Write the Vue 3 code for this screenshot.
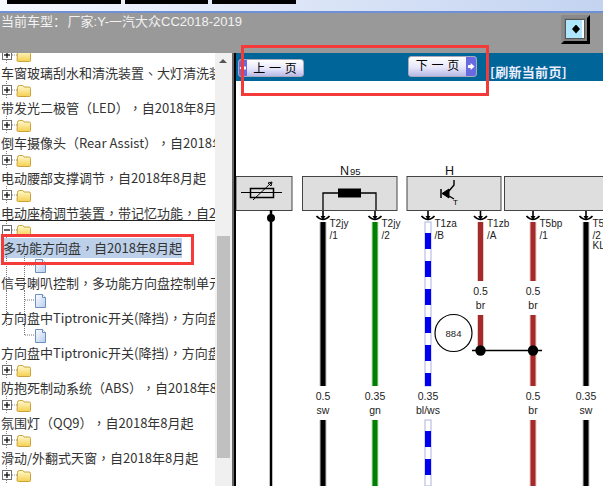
<script setup>
const items = [
  { t: '车窗玻璃刮水和清洗装置、大灯清洗装置，自2018年8月起', k: 'folder' },
  { t: '带发光二极管（LED），自2018年8月起', k: 'folder' },
  { t: '倒车摄像头（Rear Assist），自2018年8月起', k: 'folder' },
  { t: '电动腰部支撑调节，自2018年8月起', k: 'folder' },
  { t: '电动座椅调节装置，带记忆功能，自2018年8月起', k: 'folder', rule: true },
  { t: '多功能方向盘，自2018年8月起', k: 'open', sel: true },
  { t: '信号喇叭控制，多功能方向盘控制单元，自2018年8月起', k: 'doc', outer: true },
  { t: '方向盘中Tiptronic开关(降挡)，方向盘左侧，自2018年8月起', k: 'doc', outer: true, inner: true },
  { t: '方向盘中Tiptronic开关(降挡)，方向盘右侧，自2018年8月起', k: 'doc', last: true },
  { t: '防抱死制动系统（ABS），自2018年8月起', k: 'folder' },
  { t: '氛围灯（QQ9），自2018年8月起', k: 'folder' },
  { t: '滑动/外翻式天窗，自2018年8月起', k: 'folder' },
  { t: '', k: 'folder' }
]

const boxes = [
  { x: 236, w: 56 }, { x: 302.5, w: 94.5 }, { x: 407, w: 94 }, { x: 504.5, w: 104 }
]

const solids = [
  { x: 323, c: '#000', s: [[222, 386], [420, 486]] },
  { x: 375, c: '#008000', s: [[222, 386], [420, 486]] },
  { x: 480.5, c: '#a52a2a', s: [[222, 281], [315, 352]] },
  { x: 533, c: '#a52a2a', s: [[222, 281], [315, 386], [420, 486]] },
  { x: 586, c: '#000', s: [[222, 386], [420, 486]] }
]

const blueTop = [233, 261, 289, 317, 345, 373]
const blueBottom = [431, 459]

const connectors = [
  { x: 323, a: 'T2jy', b: '/1' }, { x: 375, a: 'T2jy', b: '/2' },
  { x: 428, a: 'T1za', b: '/B' }, { x: 480.5, a: 'T1zb', b: '/A' },
  { x: 533, a: 'T5bp', b: '/1' }, { x: 586, a: 'T5bp', b: '/2', c: 'KL' }
]

const sizes = [
  { x: 323, y: 396, a: '0.5', b: 'sw' }, { x: 375, y: 396, a: '0.35', b: 'gn' },
  { x: 428, y: 396, a: '0.35', b: 'bl/ws' }, { x: 533, y: 396, a: '0.5', b: 'br' },
  { x: 586, y: 396, a: '0.35', b: 'sw' }, { x: 480.5, y: 291, a: '0.5', b: 'br' },
  { x: 533, y: 291, a: '0.5', b: 'br' }
]
</script>

<template>
  <div class="page">
    <svg class="defs" width="0" height="0">
      <defs>
        <linearGradient id="fold" x1="0" y1="0" x2="0" y2="1">
          <stop offset="0" stop-color="#fffbd0" />
          <stop offset="1" stop-color="#f5cf4e" />
        </linearGradient>
        <linearGradient id="sheet" x1="0" y1="0" x2="1" y2="1">
          <stop offset="0" stop-color="#fff" />
          <stop offset="1" stop-color="#b5cdf0" />
        </linearGradient>
      </defs>
    </svg>

    <header class="top">
      <div class="tabs"><i class="tab t1"></i><i class="tab t2"></i><i class="tab t3"></i></div>
    </header>

    <div class="band">
      <span class="model">当前车型： 厂家:Y-一汽大众CC2018-2019</span>
      <button class="toggle"><span class="toggle-in"><i class="diamond"></i></span></button>
    </div>

    <div class="main">
      <aside class="tree">
        <div class="tree-in">
          <div v-for="(it, i) in items" :key="i" class="item">
            <i v-if="it.outer" class="guide outer"></i>
            <i v-if="it.inner || it.k === 'doc'" class="guide inner" :class="{ half: it.last }"></i>
            <div class="icons">
              <svg v-if="it.k !== 'doc'" width="34" height="18" viewBox="0 0 34 18">
                <path d="M6.500 0v4M6.500 14v4" stroke="#888" stroke-dasharray="1 1" />
                <rect x="2.500" y="4.500" width="9" height="9" fill="#fff" stroke="#707070" />
                <path d="M4 9h6" stroke="#000" stroke-width="1.200" />
                <path v-if="it.k === 'folder'" d="M7 6v6" stroke="#000" stroke-width="1.200" />
                <path d="M12 9h5" stroke="#888" stroke-dasharray="1 1" />
                <path d="M17.500 6.500q0-2 2-2h3q1 0 1.500 1.500h5q1.500 0 1.500 1.500v7q0 1-1 1h-11q-1.500 0-1.500-1z" fill="url(#fold)" stroke="#c9a23c" />
              </svg>
              <svg v-else width="48" height="18" viewBox="0 0 48 18">
                <path d="M25 9h10" stroke="#777" stroke-dasharray="1 1" />
                <path d="M35.500 3.500h7l3 3v10h-10z" fill="url(#sheet)" stroke="#6f8fbf" />
                <path d="M42.500 3.500v3h3" fill="#fff" stroke="#6f8fbf" />
              </svg>
            </div>
            <div class="label" :class="{ rule: it.rule }"><span :class="{ selected: it.sel }">{{ it.t }}</span></div>
          </div>
        </div>
      </aside>

      <div class="scroll">
        <i class="up"></i>
        <i class="thumb"></i>
      </div>

      <div class="split"></div>

      <section class="content">
        <div class="bar">
          <button class="pg prev"><span class="cell"><i class="arrow"></i></span><span class="txt">上 一 页</span></button>
          <button class="pg next"><span class="txt">下 一 页</span><span class="cell"><i class="arrow"></i></span></button>
          <span class="refresh">[刷新当前页]</span>
        </div>

        <svg class="diagram" width="367" height="405" viewBox="236 81 367 405">
          <g v-for="(b, i) in boxes" :key="'b' + i">
            <rect :x="b.x" y="176.500" :width="b.w" height="34" fill="#dedede" stroke="#444" />
          </g>

          <text class="name" x="340" y="175">N</text>
          <text class="sub" x="350" y="175">95</text>
          <text class="name" x="445" y="175">H</text>

          <path d="M241 192.500h41" stroke="#000" fill="none" />
          <rect x="250.500" y="188.500" width="23" height="9" fill="none" stroke="#000" stroke-width="1.500" />
          <path d="M253 200l18-17M272 182l-4 1 3 3z" stroke="#000" fill="none" />

          <path d="M323 210v-17h15M361 193h15v17" fill="none" stroke="#000" stroke-width="1.300" />
          <rect x="338" y="188.500" width="23" height="9" fill="#000" />

          <path d="M441 189v9" stroke="#000" stroke-width="1.500" />
          <path d="M442 193.500l7-4.500v9z" fill="#000" stroke="#000" />
          <path d="M449 191l5-6v-5M449 196l5 3" fill="none" stroke="#000" stroke-width="1.400" />
          <text class="tiny" x="453" y="205">T</text>

          <path d="M271 210v276" stroke="#000" stroke-width="2.500" />
          <circle cx="271" cy="218" r="4" fill="#000" />

          <g v-for="w in solids" :key="'w' + w.x">
            <g v-for="(s, j) in w.s" :key="j">
              <rect :x="w.x - 3.500" :y="s[0]" width="7" :height="s[1] - s[0]" :fill="w.c" opacity=".25" />
              <rect :x="w.x - 2.500" :y="s[0]" width="5" :height="s[1] - s[0]" :fill="w.c" />
            </g>
          </g>

          <rect x="425" y="222" width="6" height="164" fill="#fff" stroke="#aab4e0" />
          <rect x="425" y="420" width="6" height="66" fill="#fff" stroke="#aab4e0" />
          <rect v-for="y in blueTop" :key="'t' + y" x="425" :y="y" width="6" :height="y === 373 ? 13 : 16" fill="#0000ee" />
          <rect v-for="y in blueBottom" :key="'u' + y" x="425" :y="y" width="6" height="16" fill="#0000ee" />

          <g v-for="c in connectors" :key="c.x">
            <path :d="`M${c.x} 211v7`" stroke="#000" stroke-width="1.600" />
            <path :d="`M${c.x - 2.500} 216l2.500 4 2.500-4z`" fill="#000" />
            <path :d="`M${c.x - 6.500} 216q6.500 7 13 0`" fill="none" stroke="#000" stroke-width="1.700" />
            <text class="pin" :x="c.x + 6.500" y="227">{{ c.a }}</text>
            <text class="pin" :x="c.x + 6.500" y="239">{{ c.b }}</text>
            <text v-if="c.c" class="pin" :x="c.x + 6.500" y="249">{{ c.c }}</text>
          </g>

          <g v-for="(l, i) in sizes" :key="'s' + i">
            <rect :x="l.x - 18" :y="l.y - 9" width="36" height="27" fill="#fff" />
            <text class="size" :x="l.x" :y="l.y + 4" text-anchor="middle">{{ l.a }}</text>
            <text class="size" :x="l.x" :y="l.y + 18" text-anchor="middle">{{ l.b }}</text>
          </g>

          <circle cx="453.500" cy="333" r="18.500" fill="#fff" stroke="#000" stroke-width="1.200" />
          <text class="circ" x="453.500" y="336.500" text-anchor="middle">884</text>

          <path d="M472 350.500h70" stroke="#000" stroke-width="1.500" />
          <circle cx="480.500" cy="350.500" r="5.200" fill="#000" />
          <circle cx="533" cy="350.500" r="5.200" fill="#000" />
        </svg>
      </section>
    </div>

    <i class="mark mark-top"></i>
    <i class="mark mark-tree"></i>
  </div>
</template>

<style scoped>
.page {
  position: relative;
  width: 603px;
  height: 486px;
  overflow: hidden;
  display: flex;
  flex-direction: column;
  background: #fff;
  font-family: "Noto Sans CJK SC", sans-serif;
}
.defs { position: absolute; }

.top {
  height: 11px;
  flex: none;
  background: linear-gradient(90deg, #f6f8ff, #c3d3f0);
  border-bottom: 2px solid #6d90d6;
}
.tabs { display: flex; padding-left: 7px; gap: 4px; }
.tab { display: block; height: 4px; background: #000; }
.t1 { width: 114px; }
.t2 { width: 83px; }
.t3 { width: 84px; }

.band {
  height: 40px;
  flex: none;
  background: #999;
  display: flex;
  justify-content: space-between;
  align-items: flex-start;
  padding-right: 13px;
}
.model {
  font-family: "Liberation Sans", "Noto Sans CJK SC", sans-serif;
  font-size: 13px;
  line-height: 16px;
  margin: 1px 0 0 1px;
  color: #f2f2f2;
  word-spacing: -2px;
  white-space: pre;
}
.toggle {
  width: 29px;
  height: 29px;
  margin-top: 2px;
  padding: 0;
  box-sizing: border-box;
  border: 3px solid;
  border-color: #8a8a8a #000 #000 #8a8a8a;
  background: #808080;
  display: flex;
}
.toggle-in {
  flex: 1;
  margin: 2px 3px 3px 2px;
  background: #aee6ff;
  border-right: 2px solid #fff;
  box-shadow: 0 0 0 1px #555;
  display: flex;
  align-items: center;
  justify-content: flex-end;
  padding-right: 2px;
}
.diamond {
  width: 8px;
  height: 9px;
  background: #000;
  clip-path: polygon(50% 0, 100% 50%, 50% 100%, 0 50%);
}

.main { flex: 1; min-height: 0; display: flex; }

.tree { width: 215px; flex: none; overflow: hidden; }
.tree-in { margin-top: -7px; }
.item { position: relative; height: 35px; }
.icons { height: 18px; display: flex; }
.icons svg { display: block; flex: none; }
.label {
  height: 17px;
  line-height: 17px;
  font-family: "Noto Sans CJK TC", "Noto Sans CJK SC", sans-serif;
  font-size: 13px;
  color: #333;
  white-space: nowrap;
  text-spacing-trim: space-all;
  padding-left: 1px;
  box-sizing: border-box;
}
.rule { border-bottom: 1px solid #222; }
.selected { background: #bdd0ea; margin-left: 2px; padding-bottom: 1px; }
.guide {
  position: absolute;
  top: 0;
  bottom: 0;
  border-left: 1px dotted #777;
}
.outer { left: 6px; }
.inner { left: 24px; }
.half { bottom: 26px; }

.scroll {
  width: 17px;
  flex: none;
  background: #f0f0f0;
  position: relative;
}
.up {
  position: absolute;
  left: 4px;
  top: 6px;
  border: 4px solid transparent;
  border-top: 0;
  border-bottom: 4px solid #555;
}
.thumb {
  position: absolute;
  left: 2px;
  top: 183px;
  width: 13px;
  height: 222px;
  background: #c0c0c0;
}
.split {
  width: 4px;
  flex: none;
  box-sizing: border-box;
  background: #000;
  border-left: 2px solid #666;
}

.content { flex: 1; min-width: 0; display: flex; flex-direction: column; }
.bar {
  height: 28px;
  flex: none;
  background: #006699;
  display: flex;
  align-items: flex-start;
}
.pg {
  display: flex;
  padding: 0;
  box-sizing: border-box;
  border: 1px solid #aab;
  border-radius: 3px;
  background: linear-gradient(180deg, #fff 0%, #e6e6fa 55%, #b9b9e8 100%);
  font-family: "Noto Sans CJK SC", sans-serif;
  font-size: 12px;
  line-height: 16px;
  color: #000;
  overflow: hidden;
}
.prev { width: 66px; height: 18px; margin: 6px 0 0 2px; }
.next { width: 69px; height: 21px; margin: 3px 0 0 104px; }
.txt { flex: 1; text-align: center; white-space: pre; word-spacing: 1px; }
.next .txt { padding-bottom: 2px; }
.cell {
  width: 10px;
  flex: none;
  background: #6a6ae0;
  display: flex;
  align-items: center;
  justify-content: center;
}
.prev .cell { width: 8px; transform: scaleX(-1); }
.arrow {
  width: 7px;
  height: 7px;
  background: #fff;
  clip-path: polygon(0 30%, 45% 30%, 45% 0, 100% 50%, 45% 100%, 45% 70%, 0 70%);
}
.refresh {
  margin: 10px 0 0 13px;
  color: #eef;
  font-size: 13px;
  line-height: 18px;
  letter-spacing: 0.3px;
  font-weight: 700;
  white-space: nowrap;
}

.diagram { display: block; flex: none; }
.name { font: 12.500px "Liberation Sans", sans-serif; fill: #111; }
.sub { font: 9.500px "Liberation Sans", sans-serif; fill: #111; }
.tiny { font: 8px "Liberation Sans", sans-serif; fill: #000; }
.pin { font: 10px "Liberation Sans", sans-serif; fill: #222; }
.size { font: 10.500px "Liberation Sans", sans-serif; fill: #222; }
.circ { font: 9.500px "Liberation Sans", sans-serif; fill: #222; }

.mark {
  position: absolute;
  box-sizing: border-box;
  border: 3px solid #f53a3a;
  pointer-events: none;
}
.mark-top { left: 241px; top: 45px; width: 248px; height: 51px; }
.mark-tree { left: 1px; top: 234px; width: 193px; height: 31px; }
</style>

<style>
html, body { margin: 0; overflow: hidden; background: #fff; }
</style>
